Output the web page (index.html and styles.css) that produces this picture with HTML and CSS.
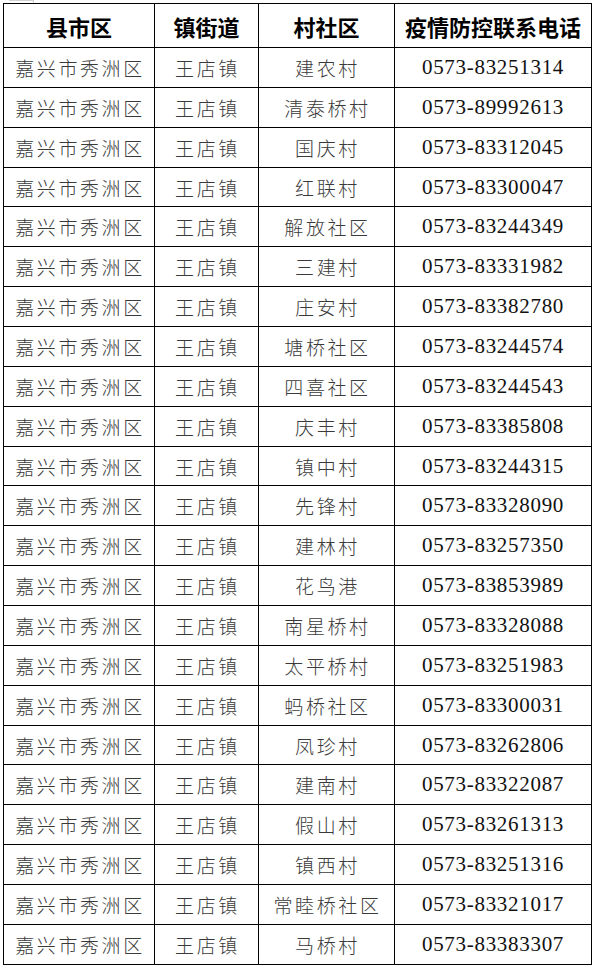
FILE: index.html
```html
<!DOCTYPE html>
<html lang="zh-CN">
<head>
<meta charset="utf-8">
<title>疫情防控联系电话</title>
<link rel="stylesheet" href="styles.css">
</head>
<body>
<div class="page">
<div class="corner"></div>
<table class="contacts">
<colgroup><col class="c1"><col class="c2"><col class="c3"><col class="c4"></colgroup>
<thead>
<tr><th>县市区</th><th>镇街道</th><th>村社区</th><th>疫情防控联系电话</th></tr>
</thead>
<tbody>
<tr><td>嘉兴市秀洲区</td><td>王店镇</td><td>建农村</td><td class="tel">0573-83251314</td></tr>
<tr><td>嘉兴市秀洲区</td><td>王店镇</td><td>清泰桥村</td><td class="tel">0573-89992613</td></tr>
<tr><td>嘉兴市秀洲区</td><td>王店镇</td><td>国庆村</td><td class="tel">0573-83312045</td></tr>
<tr><td>嘉兴市秀洲区</td><td>王店镇</td><td>红联村</td><td class="tel">0573-83300047</td></tr>
<tr><td>嘉兴市秀洲区</td><td>王店镇</td><td>解放社区</td><td class="tel">0573-83244349</td></tr>
<tr><td>嘉兴市秀洲区</td><td>王店镇</td><td>三建村</td><td class="tel">0573-83331982</td></tr>
<tr><td>嘉兴市秀洲区</td><td>王店镇</td><td>庄安村</td><td class="tel">0573-83382780</td></tr>
<tr><td>嘉兴市秀洲区</td><td>王店镇</td><td>塘桥社区</td><td class="tel">0573-83244574</td></tr>
<tr><td>嘉兴市秀洲区</td><td>王店镇</td><td>四喜社区</td><td class="tel">0573-83244543</td></tr>
<tr><td>嘉兴市秀洲区</td><td>王店镇</td><td>庆丰村</td><td class="tel">0573-83385808</td></tr>
<tr><td>嘉兴市秀洲区</td><td>王店镇</td><td>镇中村</td><td class="tel">0573-83244315</td></tr>
<tr><td>嘉兴市秀洲区</td><td>王店镇</td><td>先锋村</td><td class="tel">0573-83328090</td></tr>
<tr><td>嘉兴市秀洲区</td><td>王店镇</td><td>建林村</td><td class="tel">0573-83257350</td></tr>
<tr><td>嘉兴市秀洲区</td><td>王店镇</td><td>花鸟港</td><td class="tel">0573-83853989</td></tr>
<tr><td>嘉兴市秀洲区</td><td>王店镇</td><td>南星桥村</td><td class="tel">0573-83328088</td></tr>
<tr><td>嘉兴市秀洲区</td><td>王店镇</td><td>太平桥村</td><td class="tel">0573-83251983</td></tr>
<tr><td>嘉兴市秀洲区</td><td>王店镇</td><td>蚂桥社区</td><td class="tel">0573-83300031</td></tr>
<tr><td>嘉兴市秀洲区</td><td>王店镇</td><td>凤珍村</td><td class="tel">0573-83262806</td></tr>
<tr><td>嘉兴市秀洲区</td><td>王店镇</td><td>建南村</td><td class="tel">0573-83322087</td></tr>
<tr><td>嘉兴市秀洲区</td><td>王店镇</td><td>假山村</td><td class="tel">0573-83261313</td></tr>
<tr><td>嘉兴市秀洲区</td><td>王店镇</td><td>镇西村</td><td class="tel">0573-83251316</td></tr>
<tr><td>嘉兴市秀洲区</td><td>王店镇</td><td>常睦桥社区</td><td class="tel">0573-83321017</td></tr>
<tr><td>嘉兴市秀洲区</td><td>王店镇</td><td>马桥村</td><td class="tel">0573-83383307</td></tr>
</tbody>
</table>
</div>
</body>
</html>
```

FILE: styles.css
```css
html, body {
  margin: 0;
  padding: 0;
  background: #ffffff;
}

.page {
  padding: 0 0 0 3px;
  width: 599px;
  box-sizing: border-box;
}

.corner {
  width: 25px;
  height: 3px;
  margin-left: 6px;
  box-sizing: border-box;
  border-top: 1px solid #d0d0d0;
  border-right: 1px solid #d0d0d0;
}

.contacts {
  border-collapse: collapse;
  table-layout: fixed;
  width: 588px;
}

.c1 { width: 151px; }
.c2 { width: 104px; }
.c3 { width: 136px; }
.c4 { width: 197px; }

.contacts th,
.contacts td {
  border: 1px solid #000000;
  padding: 0;
  text-align: center;
  vertical-align: middle;
  white-space: nowrap;
  overflow: hidden;
}

.contacts th {
  height: 43px;
  font-family: "Noto Sans CJK SC", "Noto Sans", sans-serif;
  font-weight: 700;
  font-size: 22px;
  color: #000000;
  line-height: 1;
}

.contacts td {
  height: 38.87px;
  font-family: "Noto Sans CJK SC", "Noto Sans", sans-serif;
  font-weight: 300;
  font-size: 19px;
  letter-spacing: 2.6px;
  color: #3a3a3a;
  line-height: 1;
  text-indent: 2px;
}

.contacts td.tel {
  font-family: "Liberation Serif", "Noto Sans CJK SC", serif;
  font-weight: 400;
  font-size: 21px;
  letter-spacing: 0.7px;
  color: #111111;
  text-indent: 0;
}
```
